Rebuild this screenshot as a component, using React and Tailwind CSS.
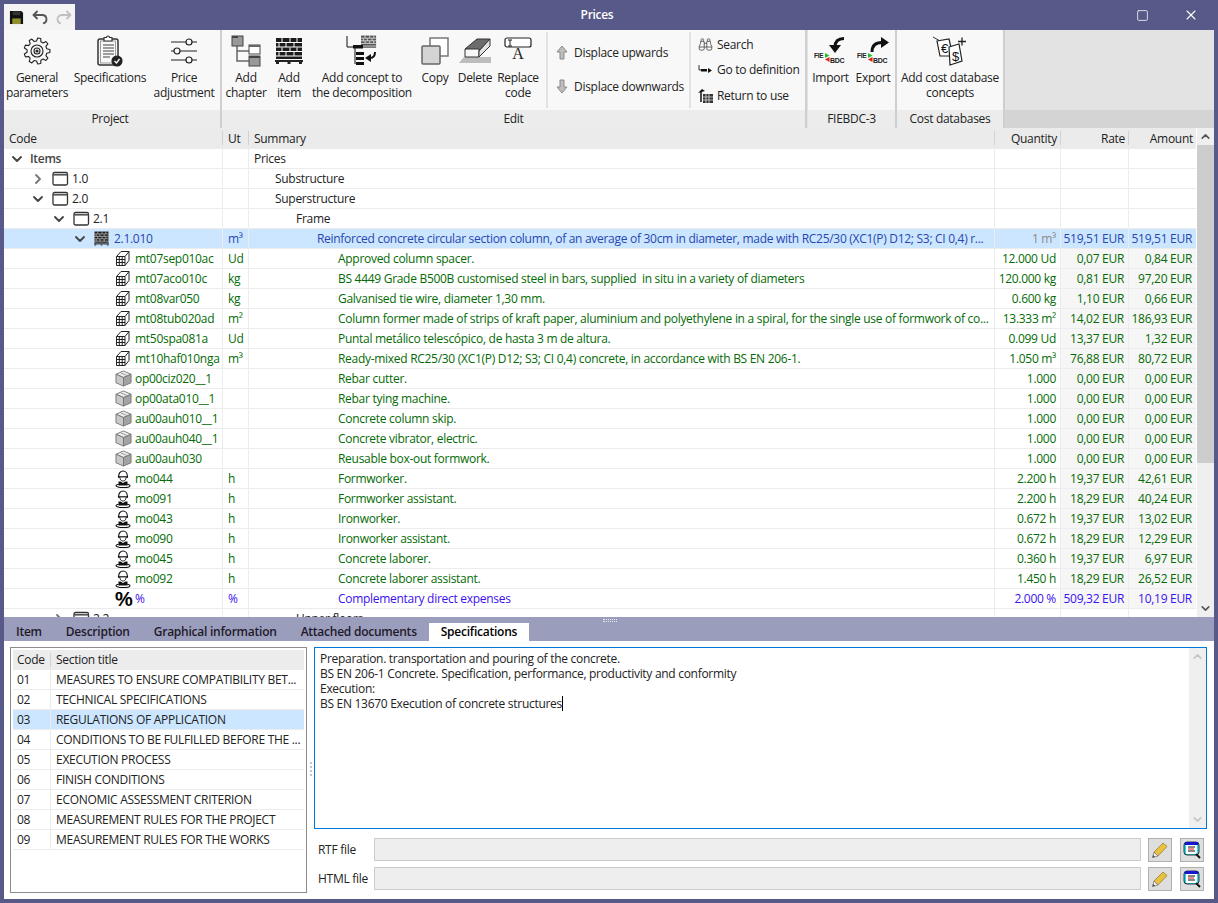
import { ChevronDown, ChevronRight, ChevronUp, Binoculars, X, Square } from "lucide-react";

const GREEN = "text-[#056b05]";

const rows = [
  { n: 0, code: "Items", sum: "Prices", open: true, kind: "root" },
  { n: 1, code: "1.0", sum: "Substructure", closed: true, kind: "folder" },
  { n: 1, code: "2.0", sum: "Superstructure", open: true, kind: "folder" },
  { n: 2, code: "2.1", sum: "Frame", open: true, kind: "folder" },
  { n: 3, code: "2.1.010", ut: "m³", sum: "Reinforced concrete circular section column, of an average of 30cm in diameter, made with RC25/30 (XC1(P) D12; S3; CI 0,4) r...", qty: "1 m³", rate: "519,51 EUR", amount: "519,51 EUR", open: true, kind: "wall", selected: true },
  { n: 4, code: "mt07sep010ac", ut: "Ud", sum: "Approved column spacer.", qty: "12.000 Ud", rate: "0,07 EUR", amount: "0,84 EUR", kind: "block" },
  { n: 4, code: "mt07aco010c", ut: "kg", sum: "BS 4449 Grade B500B customised steel in bars, supplied  in situ in a variety of diameters", qty: "120.000 kg", rate: "0,81 EUR", amount: "97,20 EUR", kind: "block" },
  { n: 4, code: "mt08var050", ut: "kg", sum: "Galvanised tie wire, diameter 1,30 mm.", qty: "0.600 kg", rate: "1,10 EUR", amount: "0,66 EUR", kind: "block" },
  { n: 4, code: "mt08tub020ad", ut: "m²", sum: "Column former made of strips of kraft paper, aluminium and polyethylene in a spiral, for the single use of formwork of co...", qty: "13.333 m²", rate: "14,02 EUR", amount: "186,93 EUR", kind: "block" },
  { n: 4, code: "mt50spa081a", ut: "Ud", sum: "Puntal metálico telescópico, de hasta 3 m de altura.", qty: "0.099 Ud", rate: "13,37 EUR", amount: "1,32 EUR", kind: "block" },
  { n: 4, code: "mt10haf010nga", ut: "m³", sum: "Ready-mixed RC25/30 (XC1(P) D12; S3; CI 0,4) concrete, in accordance with BS EN 206-1.", qty: "1.050 m³", rate: "76,88 EUR", amount: "80,72 EUR", kind: "block" },
  { n: 4, code: "op00ciz020__1", sum: "Rebar cutter.", qty: "1.000", rate: "0,00 EUR", amount: "0,00 EUR", kind: "cube" },
  { n: 4, code: "op00ata010__1", sum: "Rebar tying machine.", qty: "1.000", rate: "0,00 EUR", amount: "0,00 EUR", kind: "cube" },
  { n: 4, code: "au00auh010__1", sum: "Concrete column skip.", qty: "1.000", rate: "0,00 EUR", amount: "0,00 EUR", kind: "cube" },
  { n: 4, code: "au00auh040__1", sum: "Concrete vibrator, electric.", qty: "1.000", rate: "0,00 EUR", amount: "0,00 EUR", kind: "cube" },
  { n: 4, code: "au00auh030", sum: "Reusable box-out formwork.", qty: "1.000", rate: "0,00 EUR", amount: "0,00 EUR", kind: "cube" },
  { n: 4, code: "mo044", ut: "h", sum: "Formworker.", qty: "2.200 h", rate: "19,37 EUR", amount: "42,61 EUR", kind: "worker" },
  { n: 4, code: "mo091", ut: "h", sum: "Formworker assistant.", qty: "2.200 h", rate: "18,29 EUR", amount: "40,24 EUR", kind: "worker" },
  { n: 4, code: "mo043", ut: "h", sum: "Ironworker.", qty: "0.672 h", rate: "19,37 EUR", amount: "13,02 EUR", kind: "worker" },
  { n: 4, code: "mo090", ut: "h", sum: "Ironworker assistant.", qty: "0.672 h", rate: "18,29 EUR", amount: "12,29 EUR", kind: "worker" },
  { n: 4, code: "mo045", ut: "h", sum: "Concrete laborer.", qty: "0.360 h", rate: "19,37 EUR", amount: "6,97 EUR", kind: "worker" },
  { n: 4, code: "mo092", ut: "h", sum: "Concrete laborer assistant.", qty: "1.450 h", rate: "18,29 EUR", amount: "26,52 EUR", kind: "worker" },
  { n: 4, code: "%", ut: "%", sum: "Complementary direct expenses", qty: "2.000 %", rate: "509,32 EUR", amount: "10,19 EUR", kind: "percent" },
  { n: 2, code: "2.2", sum: "Upper floors", closed: true, kind: "folder" },
];

const sections = [
  ["01", "MEASURES TO ENSURE COMPATIBILITY BET..."],
  ["02", "TECHNICAL SPECIFICATIONS"],
  ["03", "REGULATIONS OF APPLICATION"],
  ["04", "CONDITIONS TO BE FULFILLED BEFORE THE ..."],
  ["05", "EXECUTION PROCESS"],
  ["06", "FINISH CONDITIONS"],
  ["07", "ECONOMIC ASSESSMENT CRITERION"],
  ["08", "MEASUREMENT RULES FOR THE PROJECT"],
  ["09", "MEASUREMENT RULES FOR THE WORKS"],
];

function FolderIcon() {
  return (
    <svg width="17" height="16" viewBox="0 0 17 16">
      <rect x="1" y="1.500" width="14.500" height="12.500" rx="1.500" fill="#fff" stroke="#333" strokeWidth="1.300" />
      <rect x="1" y="3" width="14.500" height="1.600" fill="#555" />
    </svg>
  );
}

function WallIcon({ size = 28 }) {
  return (
    <svg width={size} height={size} viewBox="0 0 28 28">
      <rect x="1" y="1" width="26" height="21" fill="#1c1c1c" />
      <g stroke="#fff" strokeWidth="1">
        <path d="M1 5.500H27M1 10H27M1 14.500H27M1 19H27" />
        <path d="M7 1V5M15 1V5M22 1V5M4 6V10M11 6V10M19 6V10M7 10.500V14M15 10.500V14M22 10.500V14M4 15V19M11 15V19M19 15V19" />
      </g>
      <rect x="0" y="23" width="28" height="2" fill="#222" />
      <path d="M1 25h3v2H1zM12.500 25h3v2h-3zM24 25h3v2h-3z" fill="#222" />
    </svg>
  );
}

function BlockIcon() {
  return (
    <svg width="15" height="17" viewBox="0 0 15 17" fill="none" stroke="#222" strokeWidth="1">
      <path d="M1.500 6.500L6 1.500H14V10.500L10 15.500H1.500Z" fill="#fff" />
      <path d="M1.500 6.500H10V15.500M10 6.500L14 1.500" />
      <path d="M4.300 6.500V15.500M7.200 6.500V15.500M1.500 9.500H10M1.500 12.500H10" />
    </svg>
  );
}

function CubeIcon() {
  return (
    <svg width="17" height="17" viewBox="0 0 18 18" stroke="#777" strokeWidth="1" strokeLinejoin="round">
      <path d="M9 1L17 4.500L9 8L1 4.500Z" fill="#ececec" />
      <path d="M1 4.500L9 8V17L1 13.500Z" fill="#c9c9c9" />
      <path d="M9 8L17 4.500V13.500L9 17Z" fill="#a3a3a3" />
      <path d="M6 3L13 6" stroke="#999" />
    </svg>
  );
}

function WorkerIcon() {
  return (
    <svg width="16" height="18" viewBox="0 0 16 18">
      <path d="M3.500 7C3.500 3.500 5.500 1 8 1S12.500 3.500 12.500 7Z" fill="#fff" stroke="#111" strokeWidth="1.200" />
      <path d="M3 7H13" stroke="#111" strokeWidth="1.200" />
      <path d="M5 7.500C5 10 6.300 11 8 11S11 10 11 7.500" fill="#fff" stroke="#333" />
      <path d="M3.500 11.500H5.500L8 13L10.500 11.500H12.500V15.500H3.500Z" fill="#111" />
      <ellipse cx="8" cy="15.800" rx="7" ry="1.800" fill="none" stroke="#111" strokeWidth="1.100" />
    </svg>
  );
}

function RowIcon({ kind }) {
  if (kind === "folder") return <FolderIcon />;
  if (kind === "wall") return <WallIcon size={15} />;
  if (kind === "block") return <BlockIcon />;
  if (kind === "cube") return <CubeIcon />;
  if (kind === "worker") return <WorkerIcon />;
  if (kind === "percent")
    return <span className="text-[20px] leading-none font-bold text-black font-['Liberation_Sans',sans-serif]">%</span>;
  return null;
}

function gearPath(cx, cy, outer, inner, teeth) {
  let d = "";
  const step = (Math.PI * 2) / teeth;
  for (let i = 0; i < teeth; i++) {
    const a = i * step;
    const pts = [
      [inner, a - step * 0.32],
      [outer, a - step * 0.17],
      [outer, a + step * 0.17],
      [inner, a + step * 0.32],
    ];
    pts.forEach(([r, t], j) => {
      d += `${i === 0 && j === 0 ? "M" : "L"}${(cx + r * Math.cos(t)).toFixed(2)} ${(cy + r * Math.sin(t)).toFixed(2)}`;
    });
  }
  return d + "Z";
}

function GearIcon() {
  return (
    <svg width="28" height="28" viewBox="0 0 28 28" fill="none" stroke="#222" strokeWidth="1.100" strokeLinejoin="round">
      <path d={gearPath(14, 14, 13, 10, 9)} />
      <circle cx="14" cy="14" r="6" />
      <circle cx="14" cy="14" r="3" />
      <circle cx="14" cy="14" r="1" fill="#222" />
    </svg>
  );
}

function SpecsIcon() {
  return (
    <svg width="26" height="32" viewBox="0 0 26 32" fill="none" stroke="#333" strokeWidth="1.200">
      <rect x="1" y="4" width="20" height="26" rx="2" strokeWidth="1.500" />
      <rect x="3.500" y="6" width="15" height="22" stroke="#888" strokeWidth="0.800" />
      <path d="M7 4V2.500H9.500A1.500 1.500 0 0 1 12.500 2.500H15V6H7Z" fill="#fff" />
      <path d="M6 10H17M6 13H17M6 16H17M6 19H17M6 22H13" stroke="#444" />
      <circle cx="20" cy="26" r="5" fill="#222" stroke="#222" />
      <path d="M17.500 26L19.500 28L22.500 24" stroke="#fff" strokeWidth="1.300" />
    </svg>
  );
}

function SlidersIcon() {
  return (
    <svg width="28" height="28" viewBox="0 0 28 28" fill="none" stroke="#222" strokeWidth="1.200">
      <path d="M1 5H16M22 5H27M1 14H4M10 14H27M1 23H16M22 23H27" />
      <circle cx="19" cy="5" r="3" />
      <circle cx="7" cy="14" r="3" />
      <circle cx="19" cy="23" r="3" />
    </svg>
  );
}

function ChapterIcon() {
  return (
    <svg width="30" height="32" viewBox="0 0 30 32" fill="none">
      <path d="M6 10V26H18M6 16H18" stroke="#666" strokeWidth="1.500" />
      <rect x="1" y="1" width="11" height="10" fill="#999" stroke="#444" />
      <rect x="1" y="1" width="6" height="2" fill="#444" />
      <rect x="18" y="10" width="11" height="9" fill="#fff" stroke="#444" />
      <rect x="18" y="10" width="11" height="2" fill="#666" />
      <rect x="18" y="21" width="11" height="10" fill="#999" stroke="#444" />
      <rect x="18" y="21" width="11" height="2" fill="#444" />
    </svg>
  );
}

function ConceptIcon() {
  return (
    <svg width="32" height="32" viewBox="0 0 32 32">
      <g transform="translate(15 0) scale(0.58)">
        <rect x="0" y="1" width="26" height="21" fill="#555" />
        <path d="M0 5.500H26M0 10H26M0 14.500H26M0 19H26M7 1V5M15 1V5M22 1V5M4 6V10M11 6V10M19 6V10M7 10.500V14M15 10.500V14M22 10.500V14" stroke="#fff" strokeWidth="1.200" />
      </g>
      <path d="M1 1V12H8" stroke="#111" strokeWidth="1" fill="none" />
      <rect x="7" y="10" width="10" height="3.500" fill="#111" />
      <path d="M9 13V29" stroke="#111" fill="none" />
      <rect x="10" y="17" width="8" height="3" fill="#111" />
      <rect x="10" y="22" width="8" height="3" fill="#111" />
      <rect x="10" y="27" width="8" height="3" fill="#111" />
      <path d="M29 17C29 21 27 23 24 23" stroke="#111" strokeWidth="2" fill="none" />
      <path d="M19 23L25 19V27Z" fill="#111" />
    </svg>
  );
}

function CopyIcon() {
  return (
    <svg width="28" height="28" viewBox="0 0 28 28">
      <rect x="9" y="1" width="18" height="18" fill="#fff" stroke="#777" strokeWidth="1.500" />
      <rect x="1" y="9" width="18" height="18" rx="1" fill="#d4d4d4" stroke="#666" strokeWidth="1.500" />
    </svg>
  );
}

function EraserIcon() {
  return (
    <svg width="32" height="26" viewBox="0 0 32 26">
      <path d="M0 25L5 19H32V25Z" fill="#bdbdbd" />
      <path d="M6 11L18 1H31L20 13Z" fill="#6c6c6c" stroke="#333" />
      <path d="M6 11H20V19H6Z" fill="#f7f7f7" stroke="#333" />
      <path d="M20 13L31 1V8L20 19Z" fill="#e2e2e2" stroke="#333" />
    </svg>
  );
}

function ReplaceIcon() {
  return (
    <svg width="28" height="28" viewBox="0 0 28 28">
      <rect x="1" y="1" width="26" height="9" rx="2" fill="#fff" stroke="#222" strokeWidth="1.200" />
      <path d="M4 3H8M6 3V9M4 9H8" stroke="#222" fill="none" />
      <text x="14" y="22" fontSize="16" textAnchor="middle" fill="#222" fontFamily="Liberation Serif, serif">A</text>
    </svg>
  );
}

function DisplaceIcon({ down }) {
  return (
    <svg width="12" height="15" viewBox="0 0 12 15" className={down ? "rotate-180" : ""}>
      <path d="M6 1L11 7H8V14H4V7H1Z" fill="#bdbdbd" stroke="#8a8a8a" />
    </svg>
  );
}

function GotoIcon() {
  return (
    <svg width="15" height="10" viewBox="0 0 15 10">
      <path d="M1 0V5H8" stroke="#333" fill="none" />
      <rect x="3" y="4" width="6" height="2.500" fill="#111" />
      <path d="M10 5.500L14 3V8Z" fill="#111" transform="rotate(180 12 5.500)" />
    </svg>
  );
}

function ReturnIcon() {
  return (
    <svg width="15" height="15" viewBox="0 0 15 15">
      <rect x="5" y="6" width="10" height="9" fill="#333" />
      <path d="M5 9H15M5 12H15M8 6V15M11 6V15" stroke="#ddd" strokeWidth="0.800" />
      <path d="M3 14V4" stroke="#111" strokeWidth="1.500" />
      <path d="M0 5L4 1L7 3Z" fill="#111" />
    </svg>
  );
}

function BdcIcon({ out }) {
  return (
    <svg width="33" height="30" viewBox="0 0 33 30" fontFamily="Liberation Sans, sans-serif" fontWeight="700">
      <text x="0" y="22" fontSize="6.500" fill="#222">FIE</text>
      <path d="M11 17L15.500 19.500L11 22Z" fill="#22c422" />
      <path d="M15.500 21L11 23.500L15.500 26Z" fill="#e02020" />
      <text x="16" y="26.500" fontSize="7" fill="#222">BDC</text>
      {out ? (
        <g>
          <path d="M15 16C15 9 19 6.500 25 6.500" stroke="#111" strokeWidth="3" fill="none" />
          <path d="M24 1L32 6.500L24 12Z" fill="#111" />
        </g>
      ) : (
        <g>
          <path d="M30 2.500C24 2.500 21 5 21 11" stroke="#111" strokeWidth="3" fill="none" />
          <path d="M15 9H27L21 17Z" fill="#111" />
        </g>
      )}
    </svg>
  );
}

function CostIcon() {
  return (
    <svg width="34" height="30" viewBox="0 0 34 30" fontFamily="Liberation Sans, sans-serif">
      <path d="M0 1L7 5" stroke="#333" />
      <path d="M4 5L16 3L20 20L7 20Z" fill="#fff" stroke="#222" strokeWidth="1.200" />
      <path d="M16 11L26 8L29 25L17 29Z" fill="#fff" stroke="#222" strokeWidth="1.200" />
      <text x="11.500" y="17" fontSize="13" textAnchor="middle" fill="#111">€</text>
      <text x="22.500" y="25" fontSize="13" textAnchor="middle" fill="#111">$</text>
      <path d="M25 5.500H33M29 1.500V9.500" stroke="#222" strokeWidth="1.300" />
    </svg>
  );
}

function PencilIcon() {
  return (
    <svg width="16" height="16" viewBox="0 0 16 16">
      <path d="M11 1L15 4.500L6 14L2 10Z" fill="#e8c13f" stroke="#9b8330" strokeWidth="0.800" />
      <path d="M2 10L6 14L0.500 15.500Z" fill="#eee" stroke="#777" strokeWidth="0.800" />
      <path d="M0.500 15.500L1.300 13L3 14.800Z" fill="#444" />
    </svg>
  );
}

function ViewerIcon() {
  return (
    <svg width="18" height="18" viewBox="0 0 18 18">
      <rect x="1" y="1" width="15" height="13" rx="3" fill="#29d6e8" stroke="#111" strokeWidth="0.800" />
      <rect x="2" y="1" width="13" height="3" fill="#1616d0" />
      <rect x="3" y="4" width="11" height="9" fill="#fff" />
      <path d="M5 6H12M5 10H12" stroke="#111" />
      <path d="M5 8H11" stroke="#d01616" />
      <path d="M13 13L17 17" stroke="#111" strokeWidth="2" />
    </svg>
  );
}

function RibbonButton({ icon, lines, className }) {
  return (
    <div className={`flex flex-col items-center shrink-0 ${className}`}>
      <div className="h-[38px] flex items-center justify-center">{icon}</div>
      <div className="text-center leading-[15px] whitespace-nowrap">
        {lines.map((l) => (
          <div key={l}>{l}</div>
        ))}
      </div>
    </div>
  );
}

function RibbonGroup({ label, className, labelClass = "", children }) {
  return (
    <div className={`flex flex-col border-r-2 border-[#cfcfcf] shrink-0 ${className}`}>
      <div className="h-[80px] flex bg-[#f8f8f8] pt-[2px]">{children}</div>
      <div className={`h-[18px] bg-[#ececec] text-center leading-[18px] ${labelClass}`}>{label}</div>
    </div>
  );
}

function Ribbon() {
  return (
    <div className="flex h-[98px] bg-[#e3e3e3] shrink-0">
      <RibbonGroup label="Project" className="w-[218px]" labelClass="pr-[4px]">
        <RibbonButton icon={<GearIcon />} lines={["General", "parameters"]} className="w-[66px]" />
        <RibbonButton icon={<SpecsIcon />} lines={["Specifications"]} className="w-[80px]" />
        <RibbonButton icon={<SlidersIcon />} lines={["Price", "adjustment"]} className="w-[68px]" />
      </RibbonGroup>
      <RibbonGroup label="Edit" className="w-[585px]">
        <RibbonButton icon={<ChapterIcon />} lines={["Add", "chapter"]} className="w-[48px]" />
        <RibbonButton icon={<WallIcon />} lines={["Add", "item"]} className="w-[38px]" />
        <RibbonButton icon={<ConceptIcon />} lines={["Add concept to", "the decomposition"]} className="w-[108px]" />
        <RibbonButton icon={<CopyIcon />} lines={["Copy"]} className="w-[38px]" />
        <RibbonButton icon={<EraserIcon />} lines={["Delete"]} className="w-[42px]" />
        <RibbonButton icon={<ReplaceIcon />} lines={["Replace", "code"]} className="w-[44px]" />
        <div className="w-[7px] ml-[1px] border-r-2 border-[#e2e2e2] mb-[2px]" />
        <div className="w-[143px] flex flex-col pl-[8px] pt-[13px] gap-[19px] border-r-2 border-[#e2e2e2] mb-[2px]">
          <div className="flex items-center gap-[6px] h-[15px]"><DisplaceIcon /><span>Displace upwards</span></div>
          <div className="flex items-center gap-[6px] h-[15px]"><DisplaceIcon down /><span>Displace downwards</span></div>
        </div>
        <div className="flex-1 flex flex-col pl-[7px] pt-[5px] gap-[10.500px]">
          <div className="flex items-center gap-[4px] h-[15px]"><Binoculars size={15} strokeWidth={1.400} className="text-[#555]" /><span>Search</span></div>
          <div className="flex items-center gap-[4px] h-[15px]"><GotoIcon /><span>Go to definition</span></div>
          <div className="flex items-center gap-[4px] h-[15px]"><ReturnIcon /><span>Return to use</span></div>
        </div>
      </RibbonGroup>
      <RibbonGroup label="FIEBDC-3" className="w-[89px] ml-[1px]">
        <RibbonButton icon={<BdcIcon />} lines={["Import"]} className="w-[43px] ml-[1px]" />
        <RibbonButton icon={<BdcIcon out />} lines={["Export"]} className="w-[42px]" />
      </RibbonGroup>
      <RibbonGroup label="Cost databases" className="w-[108px]">
        <RibbonButton icon={<CostIcon />} lines={["Add cost database", "concepts"]} className="w-full" />
      </RibbonGroup>
      <div className="flex-1 flex flex-col">
        <div className="h-[80px]" />
        <div className="h-[18px] bg-[#d4d4d4]" />
      </div>
    </div>
  );
}

const gridCols = "grid grid-cols-[219px_26px_746px_66px_68px_68px]";

function HeaderCell({ children, right }) {
  return (
    <div className={`h-full flex items-center px-[5px] bg-[#ebebeb] relative ${right ? "justify-end pr-[4px]" : ""}`}>
      {children}
      <span className="absolute right-0 top-[3px] bottom-[4px] w-[1px] bg-[#d2d2d2]" />
    </div>
  );
}

function TreeRow({ row }) {
  const blue = row.kind === "percent";
  const color = row.selected
    ? "text-[#2746b0]"
    : blue
      ? "text-[#3a12f0]"
      : row.qty
        ? GREEN
        : row.kind === "cube"
          ? GREEN
          : "text-[#222]";
  const cell = `border-r border-b border-[#ececec] h-[20px] flex items-center overflow-hidden`;
  const bg = row.selected ? "bg-[#cce6ff]" : "";
  const priceBg = row.selected ? "bg-[#cce6ff]" : row.rate ? "bg-[#f6f6f6]" : "";
  return (
    <div className={`${gridCols} ${color}`}>
      <div className={`${cell} ${bg}`} style={{ paddingLeft: 2 + 21 * row.n }}>
        <span className="w-[21px] flex justify-center shrink-0">
          {row.open && <ChevronDown size={16} strokeWidth={2.800} className="text-[#444]" />}
          {row.closed && <ChevronRight size={16} strokeWidth={2.800} className="text-[#777]" />}
        </span>
        {row.kind === "root" ? (
          <span className="ml-[3px] font-semibold text-[#444]">{row.code}</span>
        ) : (
          <>
            <span className="ml-[4px] w-[20px] shrink-0 flex items-center"><RowIcon kind={row.kind} /></span>
            <span className="whitespace-nowrap">{row.code}</span>
          </>
        )}
      </div>
      <div className={`${cell} ${bg} pl-[5px]`}>{row.ut}</div>
      <div className={`${cell} ${bg} whitespace-pre`} style={{ paddingLeft: 5 + 21 * row.n }}>{row.sum}</div>
      <div className={`${cell} ${bg} justify-end pr-[4px] ${row.selected ? "text-[#8a8a8a]" : ""}`}>{row.qty}</div>
      <div className={`${cell} ${priceBg} justify-end pr-[4px]`}>{row.rate}</div>
      <div className={`${cell} ${priceBg} justify-end pr-[4px]`}>{row.amount}</div>
    </div>
  );
}

function Scrollbar({ up = "text-[#555]", down = "text-[#555]", thumb, className }) {
  return (
    <div className={`flex flex-col bg-[#efefef] shrink-0 ${className}`}>
      <div className="h-[17px] flex items-center justify-center shrink-0"><ChevronUp size={13} strokeWidth={3} className={up} /></div>
      {thumb ? <div className={`bg-[#cdcdcd] shrink-0 ${thumb}`} /> : null}
      <div className="flex-1" />
      <div className="h-[17px] flex items-center justify-center shrink-0"><ChevronDown size={13} strokeWidth={3} className={down} /></div>
    </div>
  );
}

function TreeTable() {
  return (
    <div className="flex h-[489px] bg-white shrink-0 overflow-hidden">
      <div className="flex-1 overflow-hidden">
        <div className={`${gridCols} h-[21px] text-[#222]`}>
          <HeaderCell>Code</HeaderCell>
          <HeaderCell>Ut</HeaderCell>
          <HeaderCell>Summary</HeaderCell>
          <HeaderCell right>Quantity</HeaderCell>
          <HeaderCell right>Rate</HeaderCell>
          <HeaderCell right>Amount</HeaderCell>
        </div>
        {rows.map((row) => (
          <TreeRow key={row.code} row={row} />
        ))}
      </div>
      <Scrollbar className="w-[17px] ml-[1px]" thumb="h-[318px]" />
    </div>
  );
}

function Tabs() {
  const tabs = ["Item", "Description", "Graphical information", "Attached documents"];
  return (
    <div className="h-[24px] bg-[#9b9dbd] shrink-0 flex flex-col relative">
      <div className="absolute left-[599px] top-[2px] w-[14px] h-[3px] border-y border-dotted border-[#e8e8f0]" />
      <div className="mt-[6px] h-[18px] flex items-end font-semibold text-[#1e1a28] pl-[12px] gap-[24px] tracking-[-0.24px]">
        {tabs.map((t) => (
          <div key={t} className="h-[18px] leading-[17px] whitespace-nowrap">{t}</div>
        ))}
        <div className="h-[18px] leading-[17px] bg-white text-black px-[12px] -ml-[12px]">Specifications</div>
      </div>
    </div>
  );
}

function SectionList() {
  return (
    <div className="w-[297px] h-[246px] border border-[#8c8c8c] p-[2px] shrink-0 text-[#222]">
      <div className="flex h-[20px] bg-[#ececec] items-center">
        <div className="w-[38px] pl-[4px] border-r border-[#d2d2d2] h-[14px] leading-[14px]">Code</div>
        <div className="pl-[5px]">Section title</div>
      </div>
      {sections.map(([code, title]) => (
        <div key={code} className={`flex h-[20px] items-center border-b border-[#ececec] ${code === "03" ? "bg-[#cce6ff]" : ""}`}>
          <div className="w-[38px] pl-[4px] h-[20px] leading-[19px] border-r border-[#ececec] shrink-0">{code}</div>
          <div className="pl-[5px] whitespace-nowrap">{title}</div>
        </div>
      ))}
    </div>
  );
}

function FileRow({ label }) {
  return (
    <div className="flex items-center h-[23px]">
      <div className="w-[60px] pl-[4px] shrink-0 text-[#222]">{label}</div>
      <div className="w-[767px] h-[23px] bg-[#eeeeee] border border-[#cccccc] shrink-0" />
      <div className="w-[24px] h-[24px] ml-[7px] bg-[#dedede] border border-[#b0b0b0] flex items-center justify-center shrink-0"><PencilIcon /></div>
      <div className="w-[24px] h-[24px] ml-[8px] bg-[#dedede] border border-[#b0b0b0] flex items-center justify-center shrink-0"><ViewerIcon /></div>
    </div>
  );
}

function Editor() {
  return (
    <div className="flex-1 flex flex-col min-w-0">
      <div className="h-[182px] border border-[#0078d7] flex text-[#222] shrink-0">
        <div className="flex-1 pl-[5px] pt-[3px] leading-[15px]">
          <div>Preparation. transportation and pouring of the concrete.</div>
          <div>BS EN 206-1 Concrete. Specification, performance, productivity and conformity</div>
          <div>Execution:</div>
          <div className="flex">BS EN 13670 Execution of concrete structures<span className="w-[1px] h-[15px] bg-black" /></div>
        </div>
        <Scrollbar className="w-[17px]" up="text-[#c4c4c4]" down="text-[#c4c4c4]" />
      </div>
      <div className="mt-[9px] flex flex-col gap-[6px]">
        <FileRow label="RTF file" />
        <FileRow label="HTML file" />
      </div>
    </div>
  );
}

export default function App() {
  return (
    <div className="w-[1218px] h-[903px] bg-[#575a88] flex flex-col px-[4px] pb-[4px] overflow-hidden text-[12px] text-[#222] font-['Open_Sans',sans-serif] tracking-[-0.29px]">
      <div className="h-[30px] flex shrink-0 pt-[4px]">
        <div className="w-[71px] h-[26px] bg-[#f4f4f4] flex items-center gap-[8px] pl-[5px]">
          <svg width="15" height="15" viewBox="0 0 16 16">
            <path d="M1 1H13L15 3V15H1Z" fill="#111" />
            <rect x="4" y="1.500" width="8" height="4" fill="#333" />
            <rect x="3.500" y="9" width="9" height="6" fill="#8f8f2e" />
          </svg>
          <svg width="16" height="16" viewBox="0 0 16 16" fill="none" stroke="#555" strokeWidth="1.800">
            <path d="M5.500 2L1.500 6L5.500 10M1.500 6H10C13 6 14.500 8 14.500 10.500C14.500 12.500 13 14 11 14.500" />
          </svg>
          <svg width="16" height="16" viewBox="0 0 16 16" fill="none" stroke="#c0c0c0" strokeWidth="1.800">
            <path d="M10.500 2L14.500 6L10.500 10M14.500 6H6C3 6 1.500 8 1.500 10.500C1.500 12.500 3 14 5 14.500" />
          </svg>
        </div>
        <div className="flex-1 -mt-[4px] flex items-center justify-center text-white font-semibold">Prices</div>
        <div className="w-[95px] -mt-[4px] flex items-center text-white">
          <Square size={13} strokeWidth={1.400} className="ml-[17px]" />
          <X size={16} strokeWidth={1.600} className="ml-[34px]" />
        </div>
      </div>
      <Ribbon />
      <TreeTable />
      <Tabs />
      <div className="flex-1 bg-white flex pl-[6px] pr-[7px] pt-[6px] min-h-0">
        <SectionList />
        <div className="w-[7px] shrink-0 flex items-center justify-center pb-[8px]">
          <span className="h-[14px] border-l-2 border-dotted border-[#c4c4c4]" />
        </div>
        <Editor />
      </div>
    </div>
  );
}
